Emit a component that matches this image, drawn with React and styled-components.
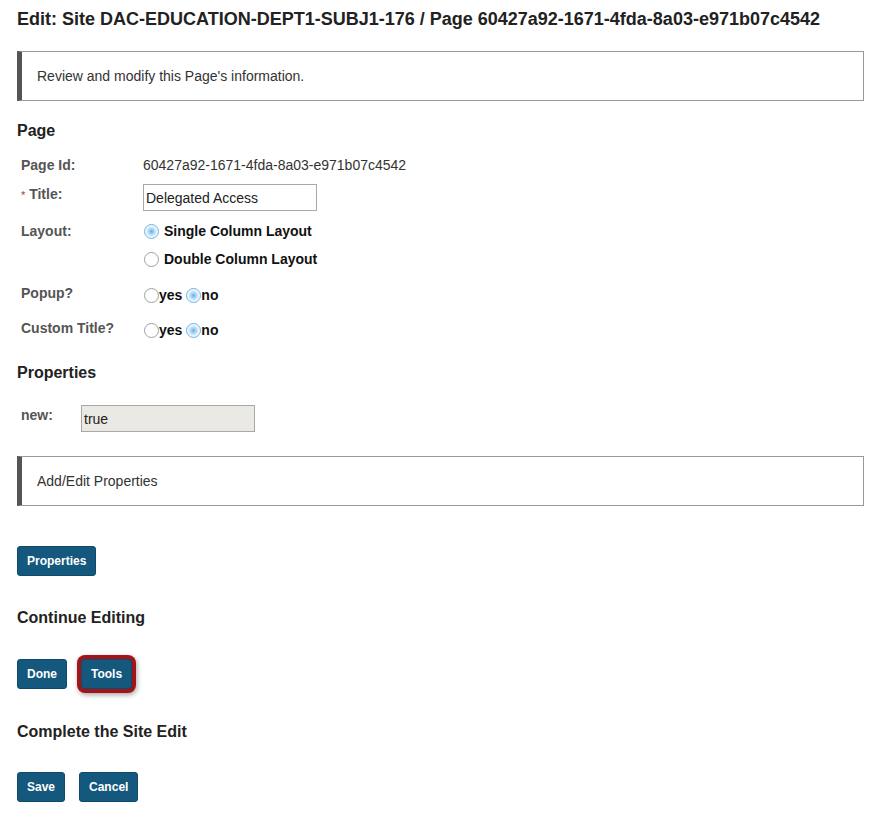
import styled, { createGlobalStyle } from "styled-components";

const GlobalStyle = createGlobalStyle`
  body {
    margin: 0;
    background: #fff;
    font-family: "Liberation Sans", Arial, sans-serif;
    color: #222;
  }
`;

export default function App() {
  return (
    <>
      <GlobalStyle />
      <Page>
        <Title>
          Edit: Site DAC-EDUCATION-DEPT1-SUBJ1-176 / Page
          60427a92-1671-4fda-8a03-e971b07c4542
        </Title>

        <Notice>Review and modify this Page's information.</Notice>

        <SectionHeading $space="20px">Page</SectionHeading>
        <Form>
          <Row $space="14px">
            <Label>Page Id:</Label>
            <Value>60427a92-1671-4fda-8a03-e971b07c4542</Value>
          </Row>

          <Row $space="9px">
            <Label>
              <Req>*</Req> Title:
            </Label>
            <TextInput defaultValue="Delegated Access" />
          </Row>

          <Row $space="10px">
            <Label>Layout:</Label>
            <RadioStack>
              <Choice>
                <Radio name="layout" defaultChecked />
                Single Column Layout
              </Choice>
              <Choice>
                <Radio name="layout" />
                Double Column Layout
              </Choice>
            </RadioStack>
          </Row>

          <Row $space="14px">
            <Label>Popup?</Label>
            <Inline>
              <Choice $tight>
                <Radio name="popup" />
                yes
              </Choice>
              <Choice $tight>
                <Radio name="popup" defaultChecked />
                no
              </Choice>
            </Inline>
          </Row>

          <Row $space="13px">
            <Label>Custom Title?</Label>
            <Inline>
              <Choice $tight>
                <Radio name="custom" />
                yes
              </Choice>
              <Choice $tight>
                <Radio name="custom" defaultChecked />
                no
              </Choice>
            </Inline>
          </Row>
        </Form>

        <SectionHeading $space="23px">Properties</SectionHeading>
        <Row $space="22px" $labelWidth="60px">
          <Label>new:</Label>
          <TextInput $readOnly readOnly defaultValue="true" />
        </Row>

        <Notice $space="24px">Add/Edit Properties</Notice>

        <ButtonRow $space="40px">
          <Button type="button">Properties</Button>
        </ButtonRow>

        <SectionHeading $space="32px">Continue Editing</SectionHeading>
        <ButtonRow $space="31px">
          <Button type="button">Done</Button>
          <Button type="button" $highlight>
            Tools
          </Button>
        </ButtonRow>

        <SectionHeading $space="33px">Complete the Site Edit</SectionHeading>
        <ButtonRow $space="30px">
          <Button type="button">Save</Button>
          <Button type="button">Cancel</Button>
        </ButtonRow>
      </Page>
    </>
  );
}

const Page = styled.div`
  padding: 8px 8px 18px 17px;
`;

const Title = styled.h1`
  margin: 0 0 21px;
  font-size: 18px;
  font-weight: bold;
  line-height: 22px;
  color: #222;
`;

const Notice = styled.div`
  display: flex;
  align-items: center;
  box-sizing: border-box;
  height: 50px;
  margin-top: ${({ $space }) => $space || "0"};
  padding-left: 15px;
  border: 1px solid #999;
  border-left: 5px solid #555;
  font-size: 14px;
  color: #333;
`;

const SectionHeading = styled.h2`
  margin: ${({ $space }) => $space} 0 0;
  font-size: 16px;
  font-weight: bold;
  line-height: 20px;
  color: #222;
`;

const Form = styled.div`
  display: flex;
  flex-direction: column;
`;

const Row = styled.div`
  display: grid;
  grid-template-columns: ${({ $labelWidth }) => $labelWidth || "122px"} auto;
  align-items: start;
  margin-top: ${({ $space }) => $space};
  padding-left: 4px;
`;

const Label = styled.div`
  font-size: 14px;
  font-weight: bold;
  color: #555;
  line-height: 20px;
`;

const Req = styled.span`
  color: #b3382c;
  font-weight: normal;
  font-size: 11px;
`;

const Value = styled.div`
  font-size: 14px;
  color: #333;
  line-height: 20px;
`;

const TextInput = styled.input`
  box-sizing: border-box;
  width: 174px;
  height: 27px;
  margin: 0;
  padding: 0 2px;
  border: 1px solid #a9a9a9;
  background: ${({ $readOnly }) => ($readOnly ? "#ebe9e3" : "#fff")};
  font-family: "Liberation Sans", Arial, sans-serif;
  font-size: 14px;
  color: #222;
  outline: none;
`;

const RadioStack = styled.div`
  display: flex;
  flex-direction: column;
  gap: 8px;
`;

const Inline = styled.div`
  display: flex;
  align-items: center;
  gap: 3px;
  padding-top: 2px;
`;

const Choice = styled.label`
  display: inline-flex;
  align-items: center;
  gap: ${({ $tight }) => ($tight ? "0" : "5px")};
  font-size: 14px;
  font-weight: bold;
  color: #111;
  line-height: 20px;
`;

const Radio = styled.input.attrs({ type: "radio" })`
  appearance: none;
  box-sizing: border-box;
  width: 15px;
  height: 15px;
  margin: 0 0 0 1px;
  border-radius: 50%;
  border: 1px solid #a0a0a0;
  background: #fff;

  &:checked {
    border-color: #6db2e3;
    background: radial-gradient(
      circle,
      #5eacec 0,
      #9ccdf2 2px,
      #e3f1fb 5px,
      #fff 7px
    );
  }
`;

const ButtonRow = styled.div`
  display: flex;
  gap: 14px;
  margin-top: ${({ $space }) => $space};
`;

const Button = styled.button`
  height: 30px;
  padding: 0 9px;
  border: 1px solid #0f4a6b;
  border-radius: ${({ $highlight }) => ($highlight ? "4px" : "3px")};
  background: #15587e;
  color: #fff;
  font-family: "Liberation Sans", Arial, sans-serif;
  font-size: 12px;
  font-weight: bold;
  cursor: pointer;
  box-shadow: ${({ $highlight }) =>
    $highlight
      ? "0 0 0 4px #a0141a, 1px 2px 5px 4px rgba(0, 0, 0, 0.35)"
      : "none"};
`;
